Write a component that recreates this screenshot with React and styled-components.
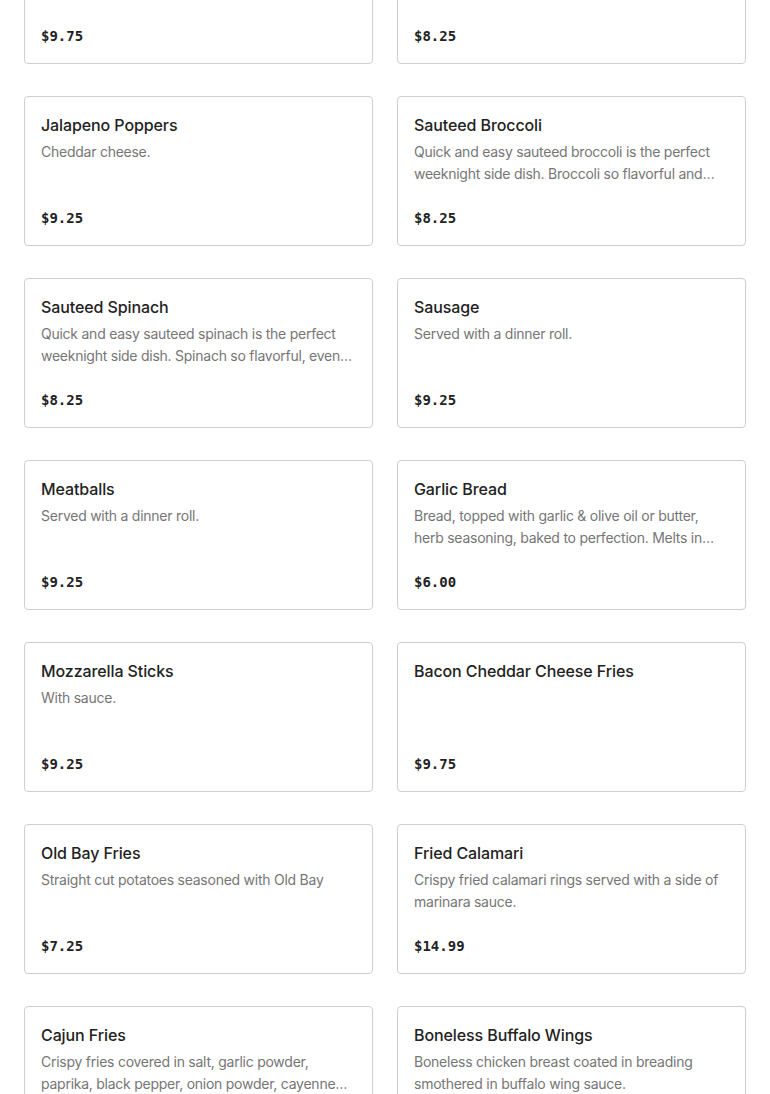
import React from 'react';
import styled, { createGlobalStyle } from 'styled-components';

const items = [
  { name: 'Chicken Tenders', desc: 'Served with fries.', price: '$9.75' },
  { name: 'Sauteed Mushrooms', desc: 'Sauteed with garlic and butter.', price: '$8.25' },
  { name: 'Jalapeno Poppers', desc: 'Cheddar cheese.', price: '$9.25' },
  {
    name: 'Sauteed Broccoli',
    desc: 'Quick and easy sauteed broccoli is the perfect weeknight side dish. Broccoli so flavorful and delicious.',
    price: '$8.25',
  },
  {
    name: 'Sauteed Spinach',
    desc: 'Quick and easy sauteed spinach is the perfect weeknight side dish. Spinach so flavorful, even kids love it.',
    price: '$8.25',
  },
  { name: 'Sausage', desc: 'Served with a dinner roll.', price: '$9.25' },
  { name: 'Meatballs', desc: 'Served with a dinner roll.', price: '$9.25' },
  {
    name: 'Garlic Bread',
    desc: 'Bread, topped with garlic & olive oil or butter, herb seasoning, baked to perfection. Melts in your mouth.',
    price: '$6.00',
  },
  { name: 'Mozzarella Sticks', desc: 'With sauce.', price: '$9.25' },
  { name: 'Bacon Cheddar Cheese Fries', desc: '', price: '$9.75' },
  { name: 'Old Bay Fries', desc: 'Straight cut potatoes seasoned with Old Bay', price: '$7.25' },
  {
    name: 'Fried Calamari',
    desc: 'Crispy fried calamari rings served with a side of marinara sauce.',
    price: '$14.99',
  },
  {
    name: 'Cajun Fries',
    desc: 'Crispy fries covered in salt, garlic powder, paprika, black pepper, onion powder, cayenne pepper and oregano.',
    price: '$7.25',
  },
  {
    name: 'Boneless Buffalo Wings',
    desc: 'Boneless chicken breast coated in breading smothered in buffalo wing sauce.',
    price: '$10.99',
  },
];

const GlobalStyle = createGlobalStyle`
  body {
    margin: 0;
    background: #fff;
    font-family: Inter, "Noto Sans", "Liberation Sans", sans-serif;
    overflow: hidden;
  }
`;

const Grid = styled.div`
  display: grid;
  grid-template-columns: 349px 349px;
  column-gap: 24px;
  row-gap: 32px;
  padding: 0 24px;
  margin-top: -86px;
`;

const Card = styled.div`
  box-sizing: border-box;
  height: 150px;
  border: 1px solid #cfcfcf;
  border-radius: 4px;
  padding: 16px;
  display: flex;
  flex-direction: column;
  background: #fff;
`;

const Title = styled.div`
  font-size: 16px;
  line-height: 24px;
  font-weight: 500;
  letter-spacing: -0.1px;
  color: #222;
`;

const Desc = styled.div`
  margin-top: 4px;
  font-size: 14px;
  line-height: 22px;
  letter-spacing: -0.25px;
  color: #767676;
  display: -webkit-box;
  -webkit-line-clamp: 2;
  -webkit-box-orient: vertical;
  overflow: hidden;
`;

const Price = styled.div`
  margin-top: auto;
  font-family: "DejaVu Sans Mono", "Liberation Mono", monospace;
  font-size: 14px;
  line-height: 22px;
  font-weight: 700;
  color: #222;
`;

const App = () => {
  return (
    <>
      <GlobalStyle />
      <Grid>
        {items.map((item) => (
          <Card key={item.name}>
            <Title>{item.name}</Title>
            {item.desc && <Desc>{item.desc}</Desc>}
            <Price>{item.price}</Price>
          </Card>
        ))}
      </Grid>
    </>
  );
};

export default App;
